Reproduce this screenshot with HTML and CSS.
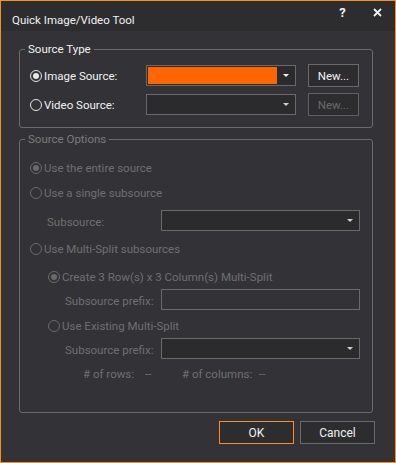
FILE: index.html
```html
<!DOCTYPE html>
<html lang="en">
<head>
    <meta charset="UTF-8">
    <title>Quick Image/Video Tool</title>
    <link rel="stylesheet" href="styles.css">
</head>
<body>
    <div class="window">
        <div class="titlebar">
            <span class="title">Quick Image/Video Tool</span>
            <span class="tb-btn help">?</span>
            <span class="tb-btn close">
                <svg width="9" height="9" viewBox="0 0 9 9"><path d="M1 1L8 8M8 1L1 8" stroke="#f1f1f1" stroke-width="1.8"/></svg>
            </span>
        </div>

        <div class="content">
            <fieldset class="group">
                <legend>Source Type</legend>

                <div class="src-row">
                    <label class="radio"><span class="dot checked"></span>Image Source:</label>
                    <div class="combo">
                        <span class="fill orange"></span>
                        <span class="arrow"></span>
                    </div>
                    <button class="btn new">New...</button>
                </div>

                <div class="src-row second">
                    <label class="radio"><span class="dot"></span>Video Source:</label>
                    <div class="combo">
                        <span class="fill"></span>
                        <span class="arrow dim"></span>
                    </div>
                    <button class="btn new" disabled>New...</button>
                </div>
            </fieldset>

            <fieldset class="group options disabled">
                <legend>Source Options</legend>

                <label class="radio row"><span class="dot checked"></span>Use the entire source</label>
                <label class="radio row gap9"><span class="dot"></span>Use a single subsource</label>

                <div class="field-row gap9 lvl1">
                    <span class="field-label">Subsource:</span>
                    <div class="combo wide">
                        <span class="fill"></span>
                        <span class="arrow dim"></span>
                    </div>
                </div>

                <label class="radio row gap10"><span class="dot"></span>Use Multi-Split subsources</label>
                <label class="radio row gap12 sub"><span class="dot checked"></span>Create 3 Row(s) x 3 Column(s) Multi-Split</label>

                <div class="field-row gap4 lvl2">
                    <span class="field-label">Subsource prefix:</span>
                    <input class="textbox" type="text" disabled>
                </div>

                <label class="radio row gap8 sub"><span class="dot"></span>Use Existing Multi-Split</label>

                <div class="field-row gap4 lvl2">
                    <span class="field-label">Subsource prefix:</span>
                    <div class="combo wide">
                        <span class="fill"></span>
                        <span class="arrow dim"></span>
                    </div>
                </div>

                <div class="info-row">
                    <span class="info-rows"># of rows:</span>
                    <span class="info-val">--</span>
                    <span class="info-cols"># of columns:</span>
                    <span>--</span>
                </div>
            </fieldset>

            <div class="actions">
                <button class="btn action ok">OK</button>
                <button class="btn action">Cancel</button>
            </div>
        </div>
    </div>
</body>
</html>
```

FILE: styles.css
```css
body {
    margin: 0;
    background: #333337;
    font-family: Roboto, "Liberation Sans", sans-serif;
    font-size: 11.5px;
    color: #f1f1f1;
}
.window {
    width: 396px;
    height: 463px;
    box-sizing: border-box;
    border: 1px solid #f7901e;
    background: #333337;
}
.titlebar {
    height: 30px;
    background: #2d2d30;
    display: flex;
    align-items: flex-start;
}
.title {
    flex: 1;
    padding: 11px 0 0 11px;
    font-size: 11.5px;
    line-height: 16px;
}
.tb-btn {
    width: 35px;
    height: 22px;
    display: flex;
    align-items: center;
    justify-content: center;
}
.help {
    font-size: 13px;
    font-weight: bold;
}
.close svg {
    display: block;
}
.content {
    padding: 10px 20px 0 18px;
}
.group {
    margin: 0 2px 0 0;
    padding: 7px 10px 11px 10px;
    border: 1px solid #6b6b6b;
    border-radius: 3px;
    min-width: 0;
}
.group legend {
    margin-left: -5px;
    padding: 0 3px;
    line-height: 16px;
    font-size: 11.5px;
}
.options {
    margin-top: 3px;
    padding: 13px 10px 30px 10px;
}
.disabled {
    color: #6f6f6f;
}
.disabled legend {
    color: #7a7a7a;
}

/* source type rows */
.src-row {
    display: flex;
    align-items: center;
    height: 23px;
}
.src-row.second {
    margin-top: 6px;
}
.src-row .radio {
    width: 116px;
}

/* radio buttons */
.radio {
    display: flex;
    align-items: center;
    line-height: 16px;
    height: 16px;
}
.dot {
    width: 12px;
    height: 12px;
    box-sizing: border-box;
    border: 1px solid #e6e6e6;
    border-radius: 50%;
    margin-right: 2px;
    display: flex;
    align-items: center;
    justify-content: center;
}
.dot.checked::after {
    content: "";
    width: 6px;
    height: 6px;
    border-radius: 50%;
    background: #e6e6e6;
}
.disabled .dot {
    border-color: #6a6a6a;
}
.disabled .dot.checked::after {
    background: #6a6a6a;
}
.sub {
    padding-left: 18px;
}
.gap4 { margin-top: 4px; }
.gap8 { margin-top: 8px; }
.gap9 { margin-top: 9px; }
.gap10 { margin-top: 10px; }
.gap12 { margin-top: 12px; }

/* combos and inputs */
.combo {
    width: 150px;
    height: 21px;
    box-sizing: border-box;
    border: 1px solid #6a6a6a;
    background: #2b2b2e;
    padding: 1px;
    display: flex;
}
.combo.wide {
    width: 199px;
}
.fill {
    flex: 1;
}
.fill.orange {
    background: #ff6600;
}
.arrow {
    width: 17px;
    display: flex;
    align-items: center;
    justify-content: center;
}
.arrow::after {
    content: "";
    border-left: 3px solid transparent;
    border-right: 3px solid transparent;
    border-top: 3px solid #f1f1f1;
}
.arrow.dim::after {
    border-top-color: #cfcfcf;
}
.textbox {
    width: 199px;
    height: 21px;
    box-sizing: border-box;
    margin: 0;
    border: 1px solid #6a6a6a;
    background: #333337;
}
.field-row {
    display: flex;
    align-items: center;
    height: 21px;
}
.field-row .field-label {
    padding-top: 2px;
}
.lvl1 {
    padding-left: 17px;
}
.lvl1 .field-label {
    width: 114px;
}
.lvl2 {
    padding-left: 35px;
}
.lvl2 .field-label {
    width: 96px;
}
.info-row {
    display: flex;
    align-items: center;
    height: 16px;
    margin-top: 7px;
    padding-left: 53px;
}
.info-rows {
    width: 62px;
}
.info-val {
    width: 37px;
}
.info-cols {
    width: 77px;
}

/* buttons */
.btn {
    height: 23px;
    box-sizing: border-box;
    border: 1px solid #6a6a6a;
    background: #2d2d30;
    color: #f1f1f1;
    font-family: Roboto, "Liberation Sans", sans-serif;
    font-size: 11.5px;
    padding: 0;
}
.btn:disabled {
    color: #6a6a6a;
    border-color: #606060;
}
.new {
    width: 51px;
    margin-left: 12px;
}
.actions {
    display: flex;
    justify-content: flex-end;
    gap: 6px;
    margin-top: 8px;
}
.action {
    width: 75px;
    font-size: 12px;
}
.ok {
    border-color: #f7901e;
}
```
